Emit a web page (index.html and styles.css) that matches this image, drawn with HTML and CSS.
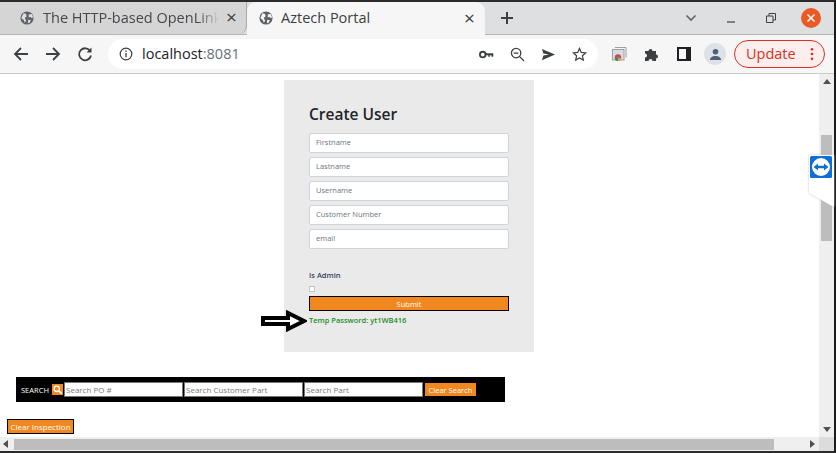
FILE: index.html
```html
<html>
    <head>
        <title>Aztech Portal</title>
        <link rel="stylesheet" href="styles.css">
    </head>

    <body>
        <div class="window">

            <div class="tabstrip">
                <div class="tab tab-off">
                    <svg class="globe" viewBox="0 0 16 16"><circle cx="8" cy="8" r="7.5" fill="#5f6368"/><path d="M4 2.5l3 1 .5 2.5-2 2 1.500 3-1.500 2.500-1-3-3-2.500zM10 4l3.500-.5 1.500 4-2 .5-1-1.500-2 1zM9.500 10l3 .5-2 3.500-1.500-.5z" fill="#dedfe0"/></svg>
                    <span class="tab-title tab-fade">The HTTP-based OpenLink</span>
                    <span class="tab-x">×</span>
                </div>
                <div class="tab tab-on">
                    <svg class="globe" viewBox="0 0 16 16"><circle cx="8" cy="8" r="7.5" fill="#5f6368"/><path d="M4 2.500l3 1 .5 2.500-2 2 1.500 3-1.500 2.500-1-3-3-2.500zM10 4l3.500-.5 1.500 4-2 .5-1-1.500-2 1zM9.500 10l3 .5-2 3.500-1.500-.5z" fill="#f6f6f6"/></svg>
                    <span class="tab-title tab-title-on">Aztech Portal</span>
                    <span class="tab-x">×</span>
                </div>
                <svg class="newtab" viewBox="0 0 14 14"><path d="M7 1v12M1 7h12" stroke="#3c4043" stroke-width="2"/></svg>
                <div class="winbtns">
                    <svg class="winbtn" viewBox="0 0 12 8"><path d="M1.500 1.500L6 6l4.500-4.500" fill="none" stroke="#5f6368" stroke-width="1.600"/></svg>
                    <svg class="winbtn" viewBox="0 0 12 12"><path d="M2 10h8" stroke="#3c4043" stroke-width="1.200"/></svg>
                    <svg class="winbtn" viewBox="0 0 12 12"><path d="M1.500 4h6.500v6.500h-6.500zM4 4v-2.500h6.500v6.500h-2.500" fill="none" stroke="#3c4043" stroke-width="1"/></svg>
                    <div class="closebtn">
                        <svg viewBox="0 0 10 10"><path d="M1.500 1.500l7 7M8.500 1.500l-7 7" stroke="#fff" stroke-width="1.500"/></svg>
                    </div>
                </div>
            </div>

            <div class="toolbar">
                <svg class="navicon" viewBox="0 0 16 16"><path d="M15 8H2M8 2L2 8l6 6" fill="none" stroke="#3c4043" stroke-width="1.800"/></svg>
                <svg class="navicon" viewBox="0 0 16 16"><path d="M1 8h13M8 2l6 6-6 6" fill="none" stroke="#3c4043" stroke-width="1.800"/></svg>
                <svg class="navicon" viewBox="0 0 16 16"><path d="M13.300 5.200A6 6 0 1 0 14 9.500" fill="none" stroke="#3c4043" stroke-width="1.800"/><path d="M14.500 1.500v5h-5z" fill="#3c4043"/></svg>
                <div class="omnibox">
                    <svg class="infoicon" viewBox="0 0 14 14"><circle cx="7" cy="7" r="5.800" fill="none" stroke="#3c4043" stroke-width="1.200"/><path d="M7 6v4.200M7 3.600v1.400" stroke="#3c4043" stroke-width="1.300"/></svg>
                    <span class="url">localhost<span class="url-port">:8081</span></span>
                    <div class="omni-icons">
                        <svg class="omni-icon" viewBox="0 0 16 16"><circle cx="4" cy="8" r="3" fill="none" stroke="#3c4043" stroke-width="2"/><path d="M7 7h8v3h-1.500v-1.500h-2V10H10V8.500H7z" fill="#3c4043" stroke="#3c4043" stroke-width=".5"/></svg>
                        <svg class="omni-icon" viewBox="0 0 16 16"><circle cx="6.500" cy="6.500" r="5" fill="none" stroke="#3c4043" stroke-width="1.400"/><path d="M4 6.500h5M10 10l5 5" stroke="#3c4043" stroke-width="1.400"/></svg>
                        <svg class="omni-icon" viewBox="0 0 16 16"><path d="M1 2l14 6-14 6 1.500-5 6-1-6-1z" fill="#3c4043"/></svg>
                        <svg class="omni-icon" viewBox="0 0 16 16"><path d="M8 1.500l1.900 4.300 4.600.5-3.400 3.100 1 4.600L8 11.600l-4.100 2.400 1-4.600L1.500 6.300l4.600-.5z" fill="none" stroke="#3c4043" stroke-width="1.300"/></svg>
                    </div>
                </div>
                <div class="ext-icons">
                    <svg class="ext-cast" viewBox="0 0 16 16"><path d="M4 1.500h11v10" fill="none" stroke="#9aa0a6"/><rect x="1.500" y="3.500" width="11.500" height="10.500" fill="#dadce0" stroke="#9aa0a6"/><circle cx="7" cy="11.500" r="3.200" fill="#db4437"/><path d="M7 11.500l-3 1.500a3.200 3.200 0 0 0 3 1.700z" fill="#0f9d58"/><path d="M7 11.500l3 1a3.200 3.200 0 0 1-3 2.200z" fill="#f4b400"/><circle cx="7" cy="11.500" r="1.300" fill="#4285f4"/></svg>
                    <svg class="ext-puzzle" viewBox="0 0 16 16"><path d="M1 5h3.500a2 2 0 1 1 4 0H12v3.500a2 2 0 1 1 0 4V15H8.500a2 2 0 1 0-4 0H1v-3.500a2 2 0 1 0 0-4z" fill="#3c4043"/></svg>
                    <svg class="ext-panel" viewBox="0 0 14 14"><path d="M1 1h12v12H1z" fill="none" stroke="#202124" stroke-width="2"/><path d="M9 1h4v12H9z" fill="#202124"/></svg>
                    <div class="avatar">
                        <svg viewBox="0 0 14 14"><circle cx="7" cy="4" r="3" fill="#4f5f78"/><path d="M1 13c0-3 3-4.500 6-4.500s6 1.500 6 4.500z" fill="#4f5f78"/></svg>
                    </div>
                </div>
                <div class="updatebtn">
                    <span class="update-text">Update</span>
                    <svg class="dots" viewBox="0 0 4 16"><circle cx="2" cy="2.500" r="1.500" fill="#d93025"/><circle cx="2" cy="8" r="1.500" fill="#d93025"/><circle cx="2" cy="13.500" r="1.500" fill="#d93025"/></svg>
                </div>
            </div>

            <div class="viewport">
                <div class="page">
                    <div class="formwrap">
                        <div class="panel">
                            <h2 class="panel-title">Create User</h2>
                            <input class="field" type="text" placeholder="Firstname">
                            <input class="field" type="text" placeholder="Lastname">
                            <input class="field" type="text" placeholder="Username">
                            <input class="field" type="text" placeholder="Customer Number">
                            <input class="field" type="text" placeholder="email">
                            <p class="admin-label">Is Admin</p>
                            <div class="checkbox"></div>
                            <button class="submit">Submit</button>
                            <p class="temp">Temp Password: yt1WB416</p>
                            <svg class="arrow" viewBox="0 0 46 22"><path d="M2 8h25V3l16 8-16 8v-5H2z" fill="#fff" stroke="#000" stroke-width="4"/></svg>
                        </div>
                    </div>

                    <div class="searchbar">
                        <span class="search-label">SEARCH</span>
                        <span class="search-icon">
                            <svg viewBox="0 0 10 10"><circle cx="4.200" cy="4.200" r="3" fill="none" stroke="#fff" stroke-width="1.500"/><path d="M6.500 6.500L9.500 9.500" stroke="#fff" stroke-width="1.800"/></svg>
                        </span>
                        <input class="search-input" type="text" placeholder="Search PO #">
                        <input class="search-input" type="text" placeholder="Search Customer Part">
                        <input class="search-input" type="text" placeholder="Search Part">
                        <button class="clear-search">Clear Search</button>
                    </div>

                    <button class="clear-inspection">Clear Inspection</button>
                </div>

                <div class="vscroll">
                    <div class="vscroll-btn"><div class="tri-up"></div></div>
                    <div class="vscroll-track"><div class="vscroll-thumb"></div></div>
                    <div class="vscroll-btn"><div class="tri-down"></div></div>
                </div>

                <div class="tv-tab">
                    <div class="tv-shape">
                        <svg viewBox="0 0 22 22"><rect width="22" height="22" rx="1.500" fill="#0e6fd6"/><circle cx="11" cy="11" r="9" fill="#fff"/><path d="M3.500 11l4.500-3.500v2.200h6V7.500l4.500 3.500-4.500 3.500v-2.200H8v2.200z" fill="#0e6fd6"/></svg>
                    </div>
                </div>
            </div>

            <div class="hscroll">
                <div class="hscroll-track">
                    <div class="tri-left"></div>
                    <div class="hscroll-thumb"></div>
                    <div class="tri-right"></div>
                </div>
                <div class="hscroll-corner"></div>
            </div>

        </div>
    </body>
</html>
```
FILE: styles.css
```css
html, body{
    margin: 0;
    height: 453px;
    overflow: hidden;
    background-color: white;
}

p, h2{
    margin: 0;
}

.window{
    width: 836px;
    height: 453px;
    box-sizing: border-box;
    display: flex;
    flex-direction: column;
    border-top: 2px solid #2b2b2b;
    border-right: 2px solid #1c1c1c;
    border-bottom: 2px solid #2b2b2b;
    font-family: "Open Sans", sans-serif;
}

.tabstrip{
    height: 33px;
    flex: none;
    display: flex;
    align-items: flex-end;
    background-color: #dedfe0;
    border-bottom: 1px solid #b4b5b6;
    box-sizing: border-box;
}

.tab{
    height: 32px;
    box-sizing: border-box;
    display: flex;
    align-items: center;
    flex: none;
}

.tab-off{
    width: 247px;
    padding-left: 20px;
    background-color: #d5d5d5;
    border-right: 1px solid #a8a8a8;
    border-bottom-right-radius: 8px;
}

.tab-on{
    width: 238px;
    height: 33px;
    margin-bottom: -1px;
    padding-left: 12px;
    background-color: #f6f6f6;
    border-radius: 9px 9px 0 0;
}

.globe{
    width: 14px;
    height: 14px;
    flex: none;
    margin-bottom: 1px;
}

.tab-title{
    width: 176px;
    margin-left: 9px;
    padding-bottom: 2px;
    overflow: hidden;
    white-space: nowrap;
    font-size: 14.500px;
    color: #45474a;
}

.tab-fade{
    -webkit-mask-image: linear-gradient(to right, black 88%, transparent 100%);
    mask-image: linear-gradient(to right, black 88%, transparent 100%);
    margin-right: 7px;
}

.tab-title-on{
    width: 183px;
    margin-left: 8px;
    color: #3c4043;
}

.tab-x{
    font-size: 19px;
    line-height: 20px;
    padding-bottom: 2px;
    color: #3c4043;
}

.newtab{
    width: 14px;
    height: 14px;
    margin: 0 0 9px 15px;
    flex: none;
}

.winbtns{
    margin-left: auto;
    height: 32px;
    display: flex;
    align-items: center;
}

.winbtn{
    width: 12px;
    height: 12px;
    margin-left: 28px;
}

.winbtns .winbtn:first-child{
    margin-left: 0;
}

.closebtn{
    width: 20px;
    height: 20px;
    margin: 0 13px 0 24px;
    border-radius: 50%;
    background-color: #ea5a24;
    display: flex;
    align-items: center;
    justify-content: center;
}

.closebtn svg{
    width: 10px;
    height: 10px;
}

.toolbar{
    height: 39px;
    flex: none;
    display: flex;
    align-items: center;
    box-sizing: border-box;
    padding-left: 13px;
    background-color: #f6f6f6;
    border-bottom: 1px solid #c9c9c9;
}

.navicon{
    width: 16px;
    height: 16px;
    margin-right: 16px;
    flex: none;
}

.omnibox{
    width: 490px;
    height: 30px;
    margin-left: -1px;
    box-sizing: border-box;
    display: flex;
    align-items: center;
    padding-left: 11px;
    background-color: white;
    border-radius: 15px;
    flex: none;
}

.infoicon{
    width: 14px;
    height: 14px;
    flex: none;
}

.url{
    margin-left: 9px;
    padding-bottom: 2px;
    font-size: 14.500px;
    color: #202124;
}

.url-port{
    color: #6b7078;
}

.omni-icons{
    margin-left: auto;
    display: flex;
    align-items: center;
    gap: 16px;
    padding-right: 11px;
}

.omni-icon{
    width: 15px;
    height: 15px;
}

.ext-icons{
    display: flex;
    align-items: center;
    margin-left: 13px;
}

.ext-cast{
    width: 16px;
    height: 16px;
}

.ext-puzzle{
    width: 16px;
    height: 16px;
    margin-left: 17px;
}

.ext-panel{
    width: 14px;
    height: 14px;
    margin-left: 17px;
}

.avatar{
    width: 22px;
    height: 22px;
    margin-left: 13px;
    border-radius: 50%;
    background-color: #dee1e6;
    display: flex;
    align-items: center;
    justify-content: center;
}

.avatar svg{
    width: 13px;
    height: 13px;
}

.updatebtn{
    width: 91px;
    height: 28px;
    margin-left: 8px;
    box-sizing: border-box;
    display: flex;
    align-items: center;
    padding-left: 11px;
    border: 1px solid #d93025;
    border-radius: 14px;
    background-color: #fbeeec;
    color: #d93025;
    font-size: 14.500px;
    flex: none;
}

.update-text{
    padding-bottom: 2px;
}

.dots{
    width: 4px;
    height: 14px;
    margin-left: 14px;
}

.viewport{
    flex: 1;
    min-height: 0;
    display: flex;
    position: relative;
}

.page{
    flex: 1;
    background-color: white;
    min-width: 0;
}

.formwrap{
    padding: 6px 0 0 284px;
}

.panel{
    width: 250px;
    height: 272px;
    box-sizing: border-box;
    padding: 25px 25px 0;
    background-color: #eaeaea;
    position: relative;
    font-family: "Open Sans", sans-serif;
}

.panel-title{
    font-size: 15.500px;
    line-height: 18px;
    font-weight: 600;
    color: #212529;
    margin-bottom: 10px;
}

.field{
    display: block;
    width: 200px;
    height: 20px;
    box-sizing: border-box;
    margin-bottom: 4px;
    padding: 0 6px 2px;
    background-color: white;
    border: 1px solid #ced4da;
    border-radius: 2px;
    outline: none;
    font-family: "Open Sans", sans-serif;
    font-size: 7.500px;
}

.field::placeholder{
    color: #6c757d;
}

.admin-label{
    margin-top: 21px;
    font-size: 7.500px;
    line-height: 10px;
    font-weight: 600;
    color: #33415c;
}

.checkbox{
    width: 6px;
    height: 6px;
    margin-top: 6px;
    box-sizing: border-box;
    background-color: white;
    border: 1px solid #c4c4c4;
}

.submit{
    display: block;
    width: 200px;
    height: 15px;
    margin-top: 4px;
    padding: 0;
    box-sizing: border-box;
    background-color: #f0881f;
    border: 1px solid black;
    color: white;
    font-family: "Open Sans", sans-serif;
    font-size: 7.500px;
    font-weight: 400;
}

.temp{
    margin-top: 4px;
    font-size: 7.500px;
    line-height: 10px;
    font-weight: 600;
    color: #1c8a2c;
}

.arrow{
    position: absolute;
    left: -23px;
    top: 230px;
    width: 46px;
    height: 22px;
}

.searchbar{
    width: 489px;
    height: 25px;
    margin: 25px 0 0 16px;
    box-sizing: border-box;
    padding-left: 5px;
    display: flex;
    align-items: center;
    background-color: black;
}

.search-label{
    width: 31px;
    color: white;
    font-size: 7.500px;
}

.search-icon{
    width: 11px;
    height: 11px;
    background-color: #f0881f;
    display: flex;
    align-items: center;
    justify-content: center;
    flex: none;
}

.search-icon svg{
    width: 9px;
    height: 9px;
}

.search-input{
    width: 119px;
    height: 15px;
    box-sizing: border-box;
    margin: 0 0 0 1px;
    padding: 0 1px;
    background-color: white;
    border: 1px solid #767676;
    border-radius: 0;
    outline: none;
    font-family: "Open Sans", sans-serif;
    font-size: 8px;
    flex: none;
}

.search-input::placeholder{
    color: #7b7b7b;
}

.clear-search{
    height: 13px;
    margin-left: 2px;
    width: 51px;
    padding: 0;
    background-color: #f0881f;
    border: none;
    color: white;
    font-family: "Open Sans", sans-serif;
    font-size: 7.500px;
    font-weight: 400;
}

.clear-inspection{
    display: block;
    width: 67px;
    height: 15px;
    margin: 17px 0 0 7px;
    padding: 0;
    box-sizing: border-box;
    background-color: #f0881f;
    border: 1px solid black;
    color: white;
    font-family: "Open Sans", sans-serif;
    font-size: 8px;
    font-weight: 400;
}

.vscroll{
    width: 15px;
    flex: none;
    display: flex;
    flex-direction: column;
    background-color: #efefef;
}

.vscroll-btn{
    height: 15px;
    flex: none;
    display: flex;
    align-items: center;
    justify-content: center;
}

.vscroll-track{
    flex: 1;
    padding-top: 46px;
}

.vscroll-thumb{
    width: 11px;
    height: 106px;
    margin-left: 2px;
    background-color: #bdbdbd;
}

.tri-up{
    border-left: 4px solid transparent;
    border-right: 4px solid transparent;
    border-bottom: 5px solid #505050;
}

.tri-down{
    border-left: 4px solid transparent;
    border-right: 4px solid transparent;
    border-top: 5px solid #505050;
}

.tv-tab{
    position: absolute;
    right: 0;
    top: 81px;
    width: 25px;
    height: 52px;
    filter: drop-shadow(0 0 1px #c4c4c4);
}

.tv-shape{
    height: 100%;
    box-sizing: border-box;
    padding: 1px 0 0 1px;
    background-color: white;
    clip-path: polygon(0 0, 100% 0, 100% 100%, 0 73%);
}

.tv-shape svg{
    display: block;
    width: 22px;
    height: 22px;
}

.hscroll{
    height: 14px;
    flex: none;
    display: flex;
    background-color: #efefef;
}

.hscroll-track{
    flex: 1;
    display: flex;
    align-items: center;
    padding-left: 3px;
}

.hscroll-thumb{
    width: 760px;
    height: 11px;
    margin-left: 6px;
    background-color: #bdbdbd;
}

.tri-left{
    border-top: 4px solid transparent;
    border-bottom: 4px solid transparent;
    border-right: 5px solid #505050;
}

.tri-right{
    margin-left: 36px;
    border-top: 4px solid transparent;
    border-bottom: 4px solid transparent;
    border-left: 5px solid #505050;
}

.hscroll-corner{
    width: 15px;
    background-color: #dcdcdc;
}
```
